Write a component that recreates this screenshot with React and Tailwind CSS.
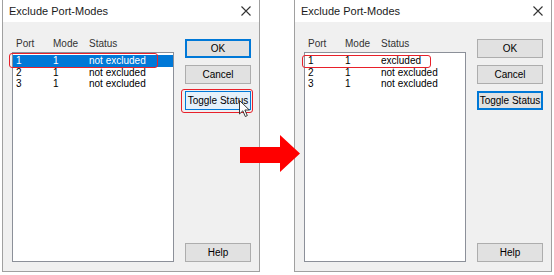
import React from "react";

const rows = [
  ["1", "1", "not excluded"],
  ["2", "1", "not excluded"],
  ["3", "1", "not excluded"],
];

function Btn({ children, variant }) {
  // variant: default | okFocus | hover | focus
  let cls = "border border-[#adadad] bg-[#e1e1e1]";
  if (variant === "okFocus") cls = "border-2 border-[#0078d7] bg-[#e1e1e1]";
  if (variant === "hover") cls = "border border-[#0078d7] bg-[#e5f1fb]";
  if (variant === "focus") cls = "border-2 border-[#0078d7] bg-[#e1e1e1]";
  return (
    <div className={`w-[66px] h-[19px] flex items-center justify-center text-[10px] text-black ${cls}`}>
      {children}
    </div>
  );
}

function Dialog({ data, selected, okVariant, toggleVariant, className }) {
  return (
    <div className={`w-[258px] h-[272px] flex flex-col border-x border-b border-[#a0a0a0] bg-[#f0f0f0] ${className}`}>
      <div className="h-[22px] bg-white flex items-center justify-between pl-[6px] pr-[8px] text-[11px] text-[#1a1a1a]">
        <span>Exclude Port-Modes</span>
        <svg width="10" height="10" viewBox="0 0 10 10">
          <path d="M0.5 0.5 L9.5 9.5 M9.5 0.5 L0.5 9.5" stroke="#333" strokeWidth="1.1" />
        </svg>
      </div>
      <div className="flex-1 flex pl-[9px] pt-[13px] pb-[9px]">
        <div className="w-[162px] flex flex-col">
          <div className="grid grid-cols-[37px_36px_1fr] pl-[4px] h-[16px] items-center text-[10px] text-[#333]">
            <span>Port</span>
            <span>Mode</span>
            <span>Status</span>
          </div>
          <div className="flex-1 mt-[1px] border border-[#8c9099] bg-white pt-[2px]">
            {data.map((r, i) => (
              <div
                key={i}
                className={`grid grid-cols-[37px_36px_1fr] pl-[3px] h-[11.5px] items-center text-[10px] leading-[11.5px] ${
                  selected === i ? "bg-[#0078d7] text-white" : "text-black"
                }`}
              >
                <span>{r[0]}</span>
                <span>{r[1]}</span>
                <span>{r[2]}</span>
              </div>
            ))}
          </div>
        </div>
        <div className="ml-[11px] flex flex-col pt-[4px]">
          <Btn variant={okVariant}>OK</Btn>
          <div className="h-[7px]" />
          <Btn>Cancel</Btn>
          <div className="h-[7px]" />
          <Btn variant={toggleVariant}>Toggle Status</Btn>
          <div className="flex-1" />
          <Btn>Help</Btn>
        </div>
      </div>
    </div>
  );
}

export default function App() {
  const after = [
    ["1", "1", "excluded"],
    ["2", "1", "not excluded"],
    ["3", "1", "not excluded"],
  ];
  return (
    <div
      className="relative w-[554px] h-[275px] bg-white overflow-hidden"
      style={{ fontFamily: '"Liberation Sans", Arial, sans-serif' }}
    >
      <div className="flex pl-[2px]">
        <Dialog data={rows} selected={0} okVariant="okFocus" toggleVariant="hover" />
        <Dialog data={after} selected={-1} okVariant="default" toggleVariant="focus" className="ml-[34px]" />
      </div>

      {/* annotations */}
      <div className="absolute left-[9px] top-[53px] w-[149px] h-[15px] border-[1.5px] border-[#e8202a] rounded-[3px]" />
      <div className="absolute left-[181px] top-[89px] w-[72px] h-[24px] border-[1.5px] border-[#e8202a] rounded-[3px]" />
      <div className="absolute left-[302px] top-[55px] w-[129px] h-[13px] border-[1.5px] border-[#e8202a] rounded-[3px]" />

      <svg className="absolute left-[240px] top-[134px]" width="61" height="40" viewBox="0 0 61 40">
        <polygon points="0,13 40,13 40,1 60,19.5 40,38 40,29 0,29" fill="#ff0000" />
      </svg>

      <svg className="absolute left-[239px] top-[100px]" width="12" height="18" viewBox="0 0 12 18">
        <path d="M0.5 0.5 L0.5 14 L3.8 10.8 L6.3 16.5 L8.3 15.6 L5.9 10 L10.3 10 Z" fill="white" stroke="#222" strokeWidth="0.9" />
      </svg>
    </div>
  );
}
